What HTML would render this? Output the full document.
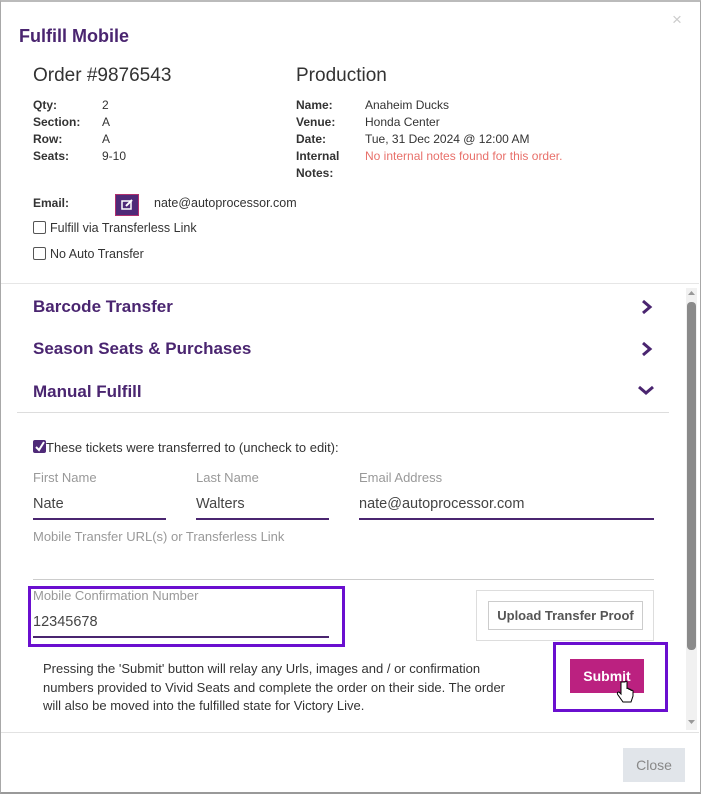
<!DOCTYPE html>
<html><head><meta charset="utf-8"><style>
*{margin:0;padding:0;box-sizing:border-box}
body{width:701px;height:794px;background:#fff;font-family:"Liberation Sans",Arial,sans-serif;color:#333;position:relative;overflow:hidden}
.a{position:absolute;white-space:nowrap}
.frame{position:absolute;left:0;top:0;width:701px;height:794px;border:1px solid #a8a8a8;border-top:2px solid #bbb;border-bottom:2px solid #999}
.b{font-weight:bold;font-size:12px;color:#333}
.v{font-size:12px;color:#333}
.h{font-weight:bold;color:#4a2570;font-size:17px}
.lab{font-size:13px;color:#999}
.inp{font-size:14.5px;color:#444}
.ul{position:absolute;height:2px;background:#4a2570}
.cb{position:absolute;width:13px;height:13px;border:1px solid #555;border-radius:2px;background:#fff}
</style></head><body>
<div class="frame"></div>
<div class="a" style="left:672px;top:10px;font-size:17px;color:#ccc">×</div>
<div class="a" style="left:19px;top:26px;font-size:18px;font-weight:bold;color:#4a2570">Fulfill Mobile</div>

<div class="a" style="left:33px;top:65px;font-size:19px;color:#333">Order #9876543</div>
<div class="a b" style="left:33px;top:98px">Qty:</div><div class="a v" style="left:102px;top:98px">2</div>
<div class="a b" style="left:33px;top:115px">Section:</div><div class="a v" style="left:102px;top:115px">A</div>
<div class="a b" style="left:33px;top:132px">Row:</div><div class="a v" style="left:102px;top:132px">A</div>
<div class="a b" style="left:33px;top:149px">Seats:</div><div class="a v" style="left:102px;top:149px">9-10</div>

<div class="a" style="left:296px;top:65px;font-size:19px;color:#333">Production</div>
<div class="a b" style="left:296px;top:98px">Name:</div><div class="a v" style="left:365px;top:98px">Anaheim Ducks</div>
<div class="a b" style="left:296px;top:115px">Venue:</div><div class="a v" style="left:365px;top:115px">Honda Center</div>
<div class="a b" style="left:296px;top:132px">Date:</div><div class="a v" style="left:365px;top:132px">Tue, 31 Dec 2024 @ 12:00 AM</div>
<div class="a b" style="left:296px;top:149px">Internal</div><div class="a v" style="left:365px;top:149px;color:#e8706a">No internal notes found for this order.</div>
<div class="a b" style="left:296px;top:166px">Notes:</div>

<div class="a b" style="left:33px;top:196px">Email:</div>
<div class="a" style="left:115px;top:194px;width:24px;height:22px;background:#4f2a78;border:1px solid #b0306e"><svg width="22" height="20" viewBox="0 0 22 20"><rect x="6" y="6" width="9" height="8" fill="none" stroke="#fff" stroke-width="1.5"/><path d="M10 11 L16 5" stroke="#fff" stroke-width="2"/></svg></div>
<div class="a v" style="left:154px;top:196px;font-size:12.5px">nate@autoprocessor.com</div>
<div class="cb" style="left:33px;top:221px"></div><div class="a v" style="left:50px;top:221px;font-size:12.5px">Fulfill via Transferless Link</div>
<div class="cb" style="left:33px;top:247px"></div><div class="a v" style="left:50px;top:247px;font-size:12.5px">No Auto Transfer</div>

<div class="a" style="left:1px;top:283px;width:698px;height:1px;background:#e6e6e6"></div>
<div class="a h" style="left:33px;top:297px">Barcode Transfer</div>
<div class="a h" style="left:33px;top:339px">Season Seats &amp; Purchases</div>
<div class="a h" style="left:33px;top:382px">Manual Fulfill</div>
<svg class="a" style="left:640px;top:299px" width="14" height="16"><path d="M3 2 L10 8 L3 14" fill="none" stroke="#4a2570" stroke-width="3"/></svg>
<svg class="a" style="left:640px;top:341px" width="14" height="16"><path d="M3 2 L10 8 L3 14" fill="none" stroke="#4a2570" stroke-width="3"/></svg>
<svg class="a" style="left:637px;top:385px" width="18" height="12"><path d="M2 2 L9 8 L16 2" fill="none" stroke="#4a2570" stroke-width="3"/></svg>
<div class="a" style="left:17px;top:412px;width:652px;height:1px;background:#ddd"></div>

<div class="a" style="left:33px;top:440px;width:13px;height:13px;background:#4f2a78;border-radius:2px"><svg width="13" height="13"><path d="M3 7 L6 10 L11 2" fill="none" stroke="#fff" stroke-width="2"/></svg></div>
<div class="a" style="left:46px;top:440px;font-size:13px;color:#333">These tickets were transferred to (uncheck to edit):</div>
<div class="a lab" style="left:33px;top:470px">First Name</div>
<div class="a lab" style="left:196px;top:470px">Last Name</div>
<div class="a lab" style="left:359px;top:470px">Email Address</div>
<div class="a inp" style="left:33px;top:496px">Nate</div>
<div class="a inp" style="left:196px;top:496px">Walters</div>
<div class="a inp" style="left:359px;top:496px">nate@autoprocessor.com</div>
<div class="ul" style="left:33px;top:518px;width:133px"></div>
<div class="ul" style="left:196px;top:518px;width:133px"></div>
<div class="ul" style="left:359px;top:518px;width:295px"></div>
<div class="a lab" style="left:33px;top:529px">Mobile Transfer URL(s) or Transferless Link</div>
<div class="a" style="left:33px;top:579px;width:621px;height:1px;background:#ccc"></div>

<div class="a" style="left:28px;top:586px;width:317px;height:61px;border:3px solid #6a0fcf"></div>
<div class="a lab" style="left:33px;top:588px">Mobile Confirmation Number</div>
<div class="a inp" style="left:33px;top:614px">12345678</div>
<div class="ul" style="left:33px;top:636px;width:296px"></div>

<div class="a" style="left:476px;top:590px;width:178px;height:51px;border:1px solid #ddd"></div>
<div class="a" style="left:488px;top:601px;width:155px;height:29px;border:1px solid #ccc;font-size:13px;font-weight:bold;color:#555;text-align:center;line-height:27px">Upload Transfer Proof</div>

<div class="a" style="left:43px;top:660px;font-size:13px;line-height:18.5px;color:#333;white-space:normal;width:475px">Pressing the 'Submit' button will relay any Urls, images and / or confirmation numbers provided to Vivid Seats and complete the order on their side. The order will also be moved into the fulfilled state for Victory Live.</div>

<div class="a" style="left:553px;top:642px;width:115px;height:70px;border:3px solid #6a0fcf"></div>
<div class="a" style="left:570px;top:659px;width:74px;height:34px;background:#bb2180;color:#fff;font-weight:bold;font-size:14px;text-align:center;line-height:34px">Submit</div>
<svg class="a" style="left:616px;top:680px" width="20" height="24"><path d="M5 2 v12 l-2-2 c-2 0-2 2-1 3 l5 7 h8 l2-6 v-5 c0-1-2-1-2 0 v-1 c0-1-2-1-2 0 v-1 c0-1-2-1-2 0 V2 c0-1-2-1-2 0z" fill="#fff" stroke="#000" stroke-width="1"/></svg>

<div class="a" style="left:686px;top:288px;width:11px;height:442px;background:#f1f1f1"></div>
<div class="a" style="left:687px;top:302px;width:9px;height:348px;background:#8a8a8a;border-radius:4px"></div>
<svg class="a" style="left:686px;top:289px" width="11" height="8"><path d="M2 6 L5.5 2 L9 6z" fill="#999"/></svg>
<svg class="a" style="left:686px;top:718px" width="11" height="8"><path d="M2 2 L5.5 6 L9 2z" fill="#999"/></svg>

<div class="a" style="left:1px;top:732px;width:698px;height:1px;background:#e2e2e2"></div>
<div class="a" style="left:623px;top:748px;width:62px;height:34px;background:#e1e5ea;color:#888;font-size:14px;text-align:center;line-height:34px">Close</div>
</body></html>
